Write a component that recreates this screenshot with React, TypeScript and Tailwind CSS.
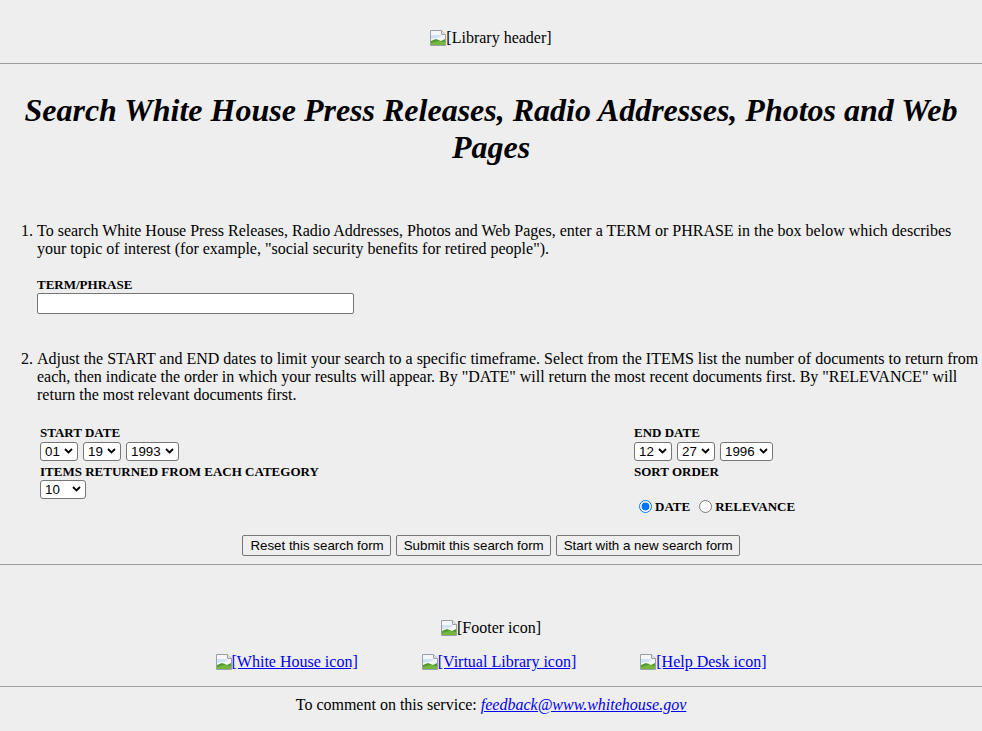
import React from "react";

function BrokenImage() {
  return (
    <svg width="16" height="16" viewBox="0 0 16 16" className="shrink-0">
      <path d="M0.5 0.5 H11.5 L15.5 4.5 V15.5 H0.5 Z" fill="#f4f6f8" stroke="#9aa0a6" />
      <path d="M11.5 0.5 V4.5 H15.5" fill="#e3e6ea" stroke="#9aa0a6" />
      <path d="M1 5 H11 V7 L1 9 Z" fill="#cfe3f5" />
      <path d="M1 15 L1 11 L6 9 L11 11 L15 9 V15 Z" fill="#4c9a2a" />
      <path d="M1 15 L1 13 L8 11 L15 12 V15 Z" fill="#76b83f" />
    </svg>
  );
}

function Alt({ text, link }: { text: string; link?: boolean }) {
  return (
    <span className="flex items-center">
      <BrokenImage />
      <span className={link ? "text-[#0000ee] underline" : ""}>{text}</span>
    </span>
  );
}

function Select({ value, options, width }: { value: string; options: string[]; width: string }) {
  return (
    <span className={`relative block ${width} h-[19px]`}>
      <select
        defaultValue={value}
        className="appearance-none block w-full h-full border border-[#767676] rounded-[3px] bg-white text-black font-normal font-['Arial',sans-serif] text-[13.33px] leading-[15px] pl-[4px]"
      >
        {options.map((o) => (
          <option key={o}>{o}</option>
        ))}
      </select>
      {/* dropdown chevron */}
      <svg width="9" height="6" viewBox="0 0 9 6" className="pointer-events-none absolute right-[5px] top-[6px]">
        <path d="M1 1 L4.5 4.5 L8 1" fill="none" stroke="#000" strokeWidth="1.8" />
      </svg>
    </span>
  );
}

const months = ["01", "02", "03", "04", "05", "06", "07", "08", "09", "10", "11", "12"];
const days = Array.from({ length: 31 }, (_, i) => String(i + 1).padStart(2, "0"));
const years = ["1993", "1994", "1995", "1996"];

function FormButton({ label }: { label: string }) {
  return (
    <button
      type="button"
      className="h-[21px] pl-[7px] pr-[6px] border border-[#767676] rounded-[2px] bg-[#efefef] text-black font-['Arial',sans-serif] text-[13.33px] leading-[15px]"
    >
      {label}
    </button>
  );
}

export default function App() {
  return (
    <div className="min-h-screen bg-[#eeeeee] text-black font-['Liberation_Serif',serif] text-[16px] leading-[18px]">
      <div className="flex justify-center pt-[29px] pb-[16px]">
        <Alt text="[Library header]" />
      </div>
      <div className="border-t border-[#a0a0a0]" />

      <h1 className="mt-[28px] text-center text-[32px] font-bold italic leading-[37px]">
        Search White House Press Releases, Radio Addresses, Photos and Web Pages
      </h1>

      <div className="flex mt-[56px]">
        <span className="w-[37px] shrink-0 text-right pr-[4px]">1.</span>
        <div className="flex-1">
          <p>
            To search White House Press Releases, Radio Addresses, Photos and Web Pages, enter a TERM or PHRASE in
            the box below which describes your topic of interest (for example, "social security benefits for retired
            people").
          </p>
          <div className="mt-[19px] text-[13px] font-bold leading-[15px]">TERM/PHRASE</div>
          <input
            type="text"
            className="block mt-[1px] w-[317px] h-[21px] border border-[#767676] rounded-[2px] bg-white"
          />
        </div>
      </div>

      <div className="flex mt-[36px]">
        <span className="w-[37px] shrink-0 text-right pr-[4px]">2.</span>
        <div className="flex-1">
          <p>
            Adjust the START and END dates to limit your search to a specific timeframe. Select from the ITEMS list
            the number of documents to return from each, then indicate the order in which your results will appear.
            By "DATE" will return the most recent documents first. By "RELEVANCE" will return the most relevant
            documents first.
          </p>

          <div className="grid grid-cols-[594px_1fr] pl-[3px] mt-[21px] text-[13px] font-bold leading-[15px]">
            <div>
              <div>START DATE</div>
              <div className="flex gap-[5px] mt-[2px]">
                <Select value="01" options={months} width="w-[38px]" />
                <Select value="19" options={days} width="w-[38px]" />
                <Select value="1993" options={years} width="w-[53px]" />
              </div>
              <div className="mt-[3px]">ITEMS RETURNED FROM EACH CATEGORY</div>
              <div className="mt-[1px]">
                <Select value="10" options={["10", "25", "50", "100"]} width="w-[46px]" />
              </div>
            </div>
            <div>
              <div>END DATE</div>
              <div className="flex gap-[5px] mt-[2px]">
                <Select value="12" options={months} width="w-[38px]" />
                <Select value="27" options={days} width="w-[38px]" />
                <Select value="1996" options={years} width="w-[53px]" />
              </div>
              <div className="mt-[3px]">SORT ORDER</div>
              <div className="flex items-center h-[15px] mt-[20px]">
                <input type="radio" name="sort" defaultChecked className="w-[13px] h-[13px] ml-[5px] mr-[3px]" />
                <span>DATE</span>
                <input type="radio" name="sort" className="w-[13px] h-[13px] ml-[9px] mr-[3px]" />
                <span>RELEVANCE</span>
              </div>
            </div>
          </div>
        </div>
      </div>

      <div className="flex justify-center gap-[5px] mt-[21px]">
        <FormButton label="Reset this search form" />
        <FormButton label="Submit this search form" />
        <FormButton label="Start with a new search form" />
      </div>

      <div className="mt-[8px] border-t border-[#a0a0a0]" />

      <div className="flex justify-center mt-[54px]">
        <Alt text="[Footer icon]" />
      </div>

      <div className="flex justify-center gap-[64px] mt-[16px]">
        <a href="#" className="flex"><Alt text="[White House icon]" link /></a>
        <a href="#" className="flex"><Alt text="[Virtual Library icon]" link /></a>
        <a href="#" className="flex"><Alt text="[Help Desk icon]" link /></a>
      </div>

      <div className="mt-[15px] border-t border-[#a0a0a0]" />

      <p className="mt-[9px] text-center">
        To comment on this service:{" "}
        <a href="#" className="italic text-[#0000ee] underline">
          feedback@www.whitehouse.gov
        </a>
      </p>
    </div>
  );
}
